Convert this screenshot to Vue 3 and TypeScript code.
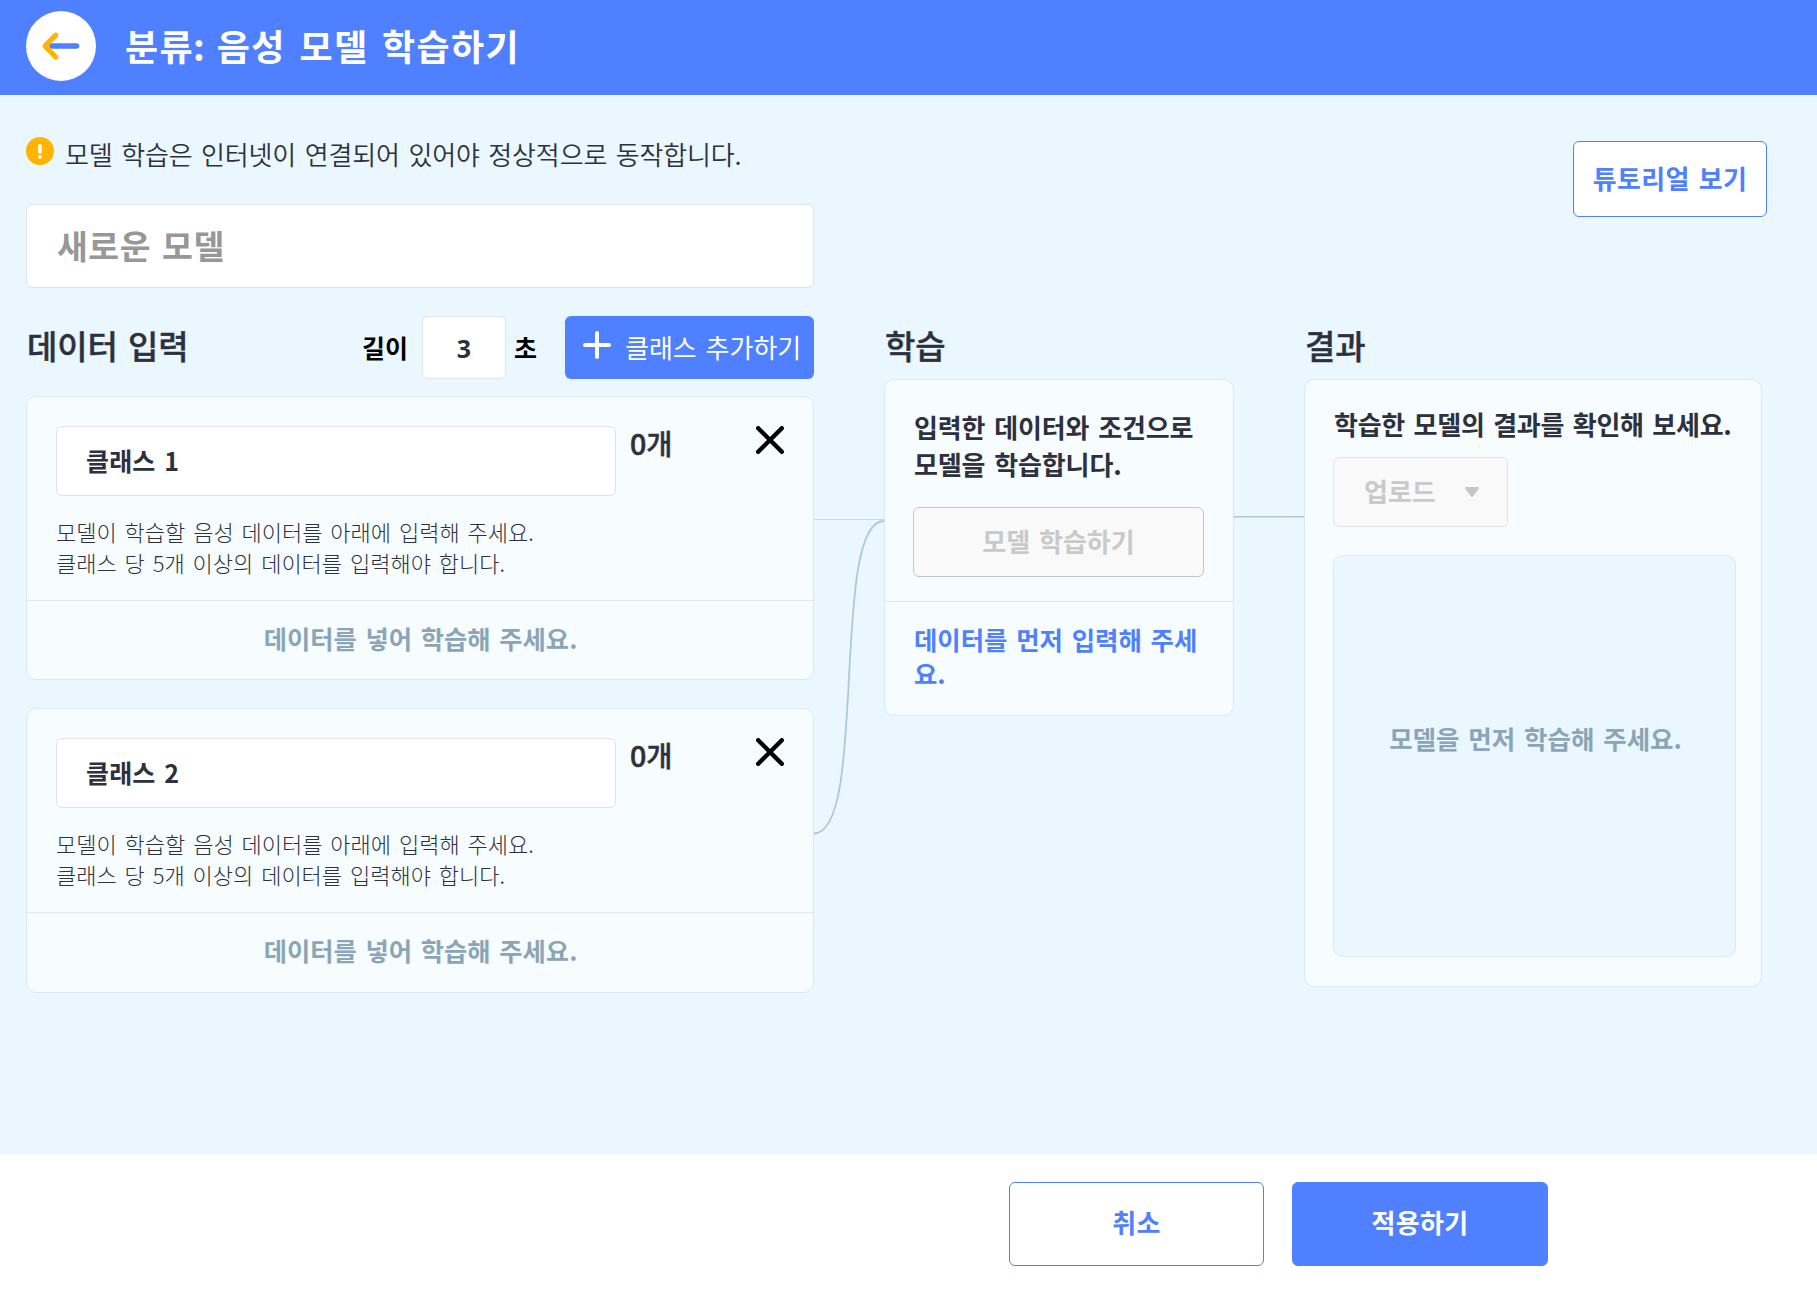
<script setup lang="ts">
import { ref } from 'vue'

interface SoundClass {
  id: number
  name: string
  samples: number
}

const modelName = ref('')
const duration = ref('3')
const classes = ref<SoundClass[]>([
  { id: 1, name: '클래스 1', samples: 0 },
  { id: 2, name: '클래스 2', samples: 0 },
])

function addClass(): void {
  const id = classes.value.length + 1
  classes.value.push({ id, name: `클래스 ${id}`, samples: 0 })
}

function removeClass(id: number): void {
  classes.value = classes.value.filter((item) => item.id !== id)
}
</script>

<template>
  <div class="page">
    <header class="header">
      <button class="back" aria-label="뒤로">
        <svg width="70" height="70" viewBox="0 0 70 70" fill="none" stroke-linecap="round" stroke-linejoin="round">
          <path d="M26 35H50.5" stroke="#4f80ff" stroke-width="5.6" />
          <path d="M29.8 24.2L19 35L29.8 46.2" stroke="#ffb400" stroke-width="5.2" />
        </svg>
      </button>
      <h1 class="title">분류<span class="colon">:</span> 음성 모델 학습하기</h1>
    </header>

    <main class="main">
      <section class="intro">
        <div class="intro-left">
          <p class="notice">
            <svg class="notice-icon" width="28" height="28" viewBox="0 0 28 28">
              <circle cx="14" cy="14" r="14" fill="#ffb400" />
              <path d="M14 9V14.8" stroke="#fff" stroke-width="3.8" stroke-linecap="round" />
              <circle cx="14" cy="19.8" r="1.9" fill="#fff" />
            </svg>
            <span class="notice-text">모델 학습은 인터넷이 연결되어 있어야 정상적으로 동작합니다.</span>
          </p>
          <input v-model="modelName" class="model-name" placeholder="새로운 모델" />
        </div>
        <button class="tutorial">튜토리얼 보기</button>
      </section>

      <section class="board">
        <div class="data">
          <div class="data-head">
            <h2 class="heading data-title">데이터 입력</h2>
            <span class="unit">길이</span>
            <input v-model="duration" class="duration" />
            <span class="unit">초</span>
            <button class="add" @click="addClass">
              <svg width="28" height="28" viewBox="0 0 28 28" stroke="#fff" stroke-width="4" stroke-linecap="round">
                <path d="M14 2V26M2 14H26" />
              </svg>
              <span class="add-text">클래스 추가하기</span>
            </button>
          </div>

          <article v-for="item in classes" :key="item.id" class="card class-card">
            <div class="class-body">
              <div class="class-row">
                <input v-model="item.name" class="class-name" />
                <span class="count"><span class="number">{{ item.samples }}</span>개</span>
                <button class="remove" aria-label="삭제" @click="removeClass(item.id)">
                  <svg width="28" height="28" viewBox="0 0 28 28" stroke="#000" stroke-width="4.4" stroke-linecap="round">
                    <path d="M2.2 2.2L25.8 25.8M25.8 2.2L2.2 25.8" />
                  </svg>
                </button>
              </div>
              <p class="guide">
                모델이 학습할 음성 데이터를 아래에 입력해 주세요.<br />
                클래스 당 5개 이상의 데이터를 입력해야 합니다.
              </p>
            </div>
            <div class="class-foot">데이터를 넣어 학습해 주세요.</div>
          </article>
        </div>

        <svg width="70" height="600" viewBox="0 0 70 600" fill="none">
          <path d="M0 231.5H70" stroke="#c3d9e6" stroke-width="1" />
          <path d="M0 545.5C54 545.5 16 233 70 233" stroke="#adc8d9" stroke-width="1.8" />
        </svg>

        <div class="train">
          <h2 class="heading">학습</h2>
          <article class="card">
            <div class="train-body">
              <p class="train-text">입력한 데이터와 조건으로<br />모델을 학습합니다.</p>
              <button class="train-button" disabled>모델 학습하기</button>
            </div>
            <div class="train-foot">데이터를 먼저 입력해 주세<br />요.</div>
          </article>
        </div>

        <svg width="70" height="600" viewBox="0 0 70 600" fill="none">
          <path d="M0 228.8H70" stroke="#adc8d9" stroke-width="1.6" />
        </svg>

        <div class="result">
          <h2 class="heading">결과</h2>
          <article class="card result-card">
            <p class="result-text">학습한 모델의 결과를 확인해 보세요.</p>
            <button class="upload" disabled>
              <span class="upload-text">업로드</span>
              <svg width="14" height="10" viewBox="0 0 14 10" fill="#c8c8c8">
                <path d="M1.5 0H12.5C13.8 0 14.3 1.2 13.6 2.1L8.2 9.2C7.6 10 6.4 10 5.8 9.2L0.4 2.1C-0.3 1.2 0.2 0 1.5 0Z" />
              </svg>
            </button>
            <div class="preview">모델을 먼저 학습해 주세요.</div>
          </article>
        </div>
      </section>
    </main>

    <footer class="footer">
      <button class="cancel">취소</button>
      <button class="apply">적용하기</button>
    </footer>
  </div>
</template>

<style>
body {
  margin: 0;
}
</style>

<style scoped>
.page {
  display: flex;
  flex-direction: column;
  width: 1817px;
  height: 1292px;
  overflow: hidden;
  background: #eaf7ff;
  color: #2c313d;
  font-family: 'Noto Sans CJK KR', sans-serif;
  font-size: 26px;
  font-weight: 700;
  word-spacing: 3px;
}

.page * {
  box-sizing: border-box;
}

h1,
h2,
p {
  margin: 0;
}

button,
input {
  padding: 0;
  border: 1px solid #e2e2e2;
  border-radius: 6px;
  outline: none;
  background: #fff;
  color: inherit;
  font: inherit;
  letter-spacing: inherit;
  word-spacing: inherit;
  white-space: nowrap;
}

svg {
  display: block;
  flex: none;
}

.header {
  display: flex;
  align-items: center;
  gap: 29px;
  height: 95px;
  padding: 0 26px 3px;
  background: #4f80ff;
}

.back {
  width: 70px;
  height: 70px;
  border: 0;
  border-radius: 50%;
}

.title {
  padding-bottom: 2px;
  color: #fff;
  font-size: 36px;
  line-height: 54px;
  letter-spacing: 1.4px;
  word-spacing: 4px;
}

.colon {
  margin-left: -1px;
  letter-spacing: -1.5px;
}

.main {
  flex: none;
  height: 1059px;
  padding: 0 50px 0 26px;
}

.intro {
  display: flex;
  justify-content: space-between;
  align-items: flex-start;
  height: 193px;
}

.intro-left {
  width: 788px;
}

.notice {
  display: flex;
  height: 109px;
  padding-top: 42px;
  font-weight: 350;
}

.notice-text {
  margin-left: 11px;
  line-height: 34px;
  letter-spacing: -0.16px;
}

.model-name {
  display: block;
  width: 788px;
  height: 84px;
  padding: 0 30px 4px;
  font-size: 33.5px;
  letter-spacing: 0.5px;
}

.model-name::placeholder {
  color: #979797;
  opacity: 1;
}

.tutorial {
  width: 194px;
  height: 76px;
  margin-top: 46px;
  padding-bottom: 4px;
  border-color: #4f80ff;
  color: #4f80ff;
  letter-spacing: 0.3px;
}

.board {
  display: flex;
  align-items: flex-start;
}

.data {
  width: 788px;
}

.data-head {
  display: flex;
  align-items: center;
  height: 63px;
  margin: 28px 0 17px;
}

.heading {
  font-size: 33px;
  font-weight: 500;
  -webkit-text-stroke: 0.4px currentColor;
}

.data-title {
  flex: 1;
  padding: 0 0 5px 1px;
  line-height: 56px;
  letter-spacing: -0.1px;
}

.unit {
  padding-bottom: 2px;
  color: #000;
  font-size: 25px;
}

.duration {
  width: 84px;
  height: 63px;
  margin: 0 8px 0 14px;
  font-family: 'Open Sans', sans-serif;
  font-size: 25px;
  font-weight: 700;
  text-align: center;
}

.add {
  display: flex;
  align-items: center;
  width: 249px;
  height: 63px;
  margin-left: 28px;
  padding-left: 18px;
  border: 0;
  background: #4f80ff;
  color: #fff;
  font-weight: 400;
}

.add svg {
  margin-bottom: 5px;
}

.add-text {
  margin-left: 14px;
  padding-bottom: 3px;
}

.card {
  border: 1px solid #d7e9f5;
  border-radius: 10px;
  background: #f7fdff;
}

.class-card {
  height: 284px;
  margin-bottom: 28px;
}

.class-card:last-child {
  height: 285px;
}

.class-body {
  height: 204px;
  padding: 29px;
  border-bottom: 1px solid #d7e9f5;
}

.class-row {
  display: flex;
  align-items: flex-start;
}

.class-name {
  width: 560px;
  height: 70px;
  padding: 0 29px 2px;
  font-size: 25px;
  letter-spacing: 0.15px;
}

.count {
  flex: 1;
  margin-left: 14px;
  font-size: 28.5px;
  font-weight: 500;
  line-height: 34px;
  -webkit-text-stroke: 0.4px currentColor;
}

.number {
  font-family: 'Open Sans', sans-serif;
  font-weight: 600;
}

.remove {
  border: 0;
  background: none;
}

.guide {
  margin-top: 20px;
  font-size: 22px;
  font-weight: 300;
  line-height: 31px;
}

.class-foot {
  color: #8aa5b7;
  font-size: 25.3px;
  line-height: 75px;
  padding-left: 1px;
  text-align: center;
}

.train {
  width: 350px;
}

.train .heading,
.result .heading {
  height: 91px;
  padding: 29px 0 0 1px;
  line-height: 56px;
}

.train-body {
  height: 222px;
  padding: 28px 28px 0;
  border-bottom: 1px solid #d7e9f5;
}

.train-text {
  padding: 0 1px;
  line-height: 37px;
  letter-spacing: -0.12px;
}

.train-button {
  width: 291px;
  height: 70px;
  margin-top: 25px;
  padding-bottom: 4px;
  border-color: #c4c4c4;
  background: #f9f9f9;
  color: #c9c9c9;
}

.train-foot {
  height: 113px;
  padding: 21px 29px;
  color: #4f80ff;
  font-size: 25.4px;
  line-height: 33.5px;
  white-space: nowrap;
}

.result {
  width: 458px;
}

.result-card {
  height: 608px;
  padding: 25px 24px 0 28px;
}

.result-text {
  padding-left: 1px;
  line-height: 37px;
  letter-spacing: -0.27px;
  white-space: nowrap;
}

.upload {
  display: flex;
  align-items: center;
  gap: 29px;
  width: 175px;
  height: 70px;
  margin-top: 15px;
  padding-left: 30px;
  background: #f9f9f9;
  color: #c9c9c9;
}

.upload-text {
  padding-bottom: 4px;
}

.preview {
  width: 403px;
  height: 402px;
  margin-top: 28px;
  padding-left: 2px;
  border: 1px solid #d7e9f5;
  border-radius: 10px;
  background: #eaf7ff;
  color: #8aa5b7;
  font-size: 25.5px;
  line-height: 364px;
  text-align: center;
}

.footer {
  display: flex;
  gap: 28px;
  height: 138px;
  padding: 28px 0 0 1009px;
  background: #fff;
}

.cancel,
.apply {
  width: 255px;
  height: 84px;
  padding-bottom: 5px;
  border-color: #4f80ff;
  color: #4f80ff;
  letter-spacing: 0.3px;
}

.apply {
  width: 256px;
  background: #4f80ff;
  color: #fff;
}
</style>
